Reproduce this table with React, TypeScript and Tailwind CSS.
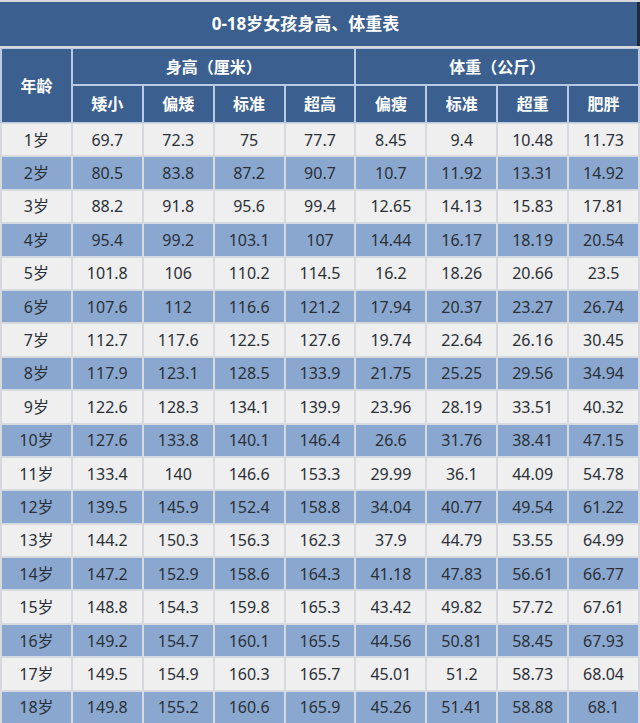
import React from "react";

const rows: string[][] = [
  ["1岁", "69.7", "72.3", "75", "77.7", "8.45", "9.4", "10.48", "11.73"],
  ["2岁", "80.5", "83.8", "87.2", "90.7", "10.7", "11.92", "13.31", "14.92"],
  ["3岁", "88.2", "91.8", "95.6", "99.4", "12.65", "14.13", "15.83", "17.81"],
  ["4岁", "95.4", "99.2", "103.1", "107", "14.44", "16.17", "18.19", "20.54"],
  ["5岁", "101.8", "106", "110.2", "114.5", "16.2", "18.26", "20.66", "23.5"],
  ["6岁", "107.6", "112", "116.6", "121.2", "17.94", "20.37", "23.27", "26.74"],
  ["7岁", "112.7", "117.6", "122.5", "127.6", "19.74", "22.64", "26.16", "30.45"],
  ["8岁", "117.9", "123.1", "128.5", "133.9", "21.75", "25.25", "29.56", "34.94"],
  ["9岁", "122.6", "128.3", "134.1", "139.9", "23.96", "28.19", "33.51", "40.32"],
  ["10岁", "127.6", "133.8", "140.1", "146.4", "26.6", "31.76", "38.41", "47.15"],
  ["11岁", "133.4", "140", "146.6", "153.3", "29.99", "36.1", "44.09", "54.78"],
  ["12岁", "139.5", "145.9", "152.4", "158.8", "34.04", "40.77", "49.54", "61.22"],
  ["13岁", "144.2", "150.3", "156.3", "162.3", "37.9", "44.79", "53.55", "64.99"],
  ["14岁", "147.2", "152.9", "158.6", "164.3", "41.18", "47.83", "56.61", "66.77"],
  ["15岁", "148.8", "154.3", "159.8", "165.3", "43.42", "49.82", "57.72", "67.61"],
  ["16岁", "149.2", "154.7", "160.1", "165.5", "44.56", "50.81", "58.45", "67.93"],
  ["17岁", "149.5", "154.9", "160.3", "165.7", "45.01", "51.2", "58.73", "68.04"],
  ["18岁", "149.8", "155.2", "160.6", "165.9", "45.26", "51.41", "58.88", "68.1"],
];

const heightCols = ["矮小", "偏矮", "标准", "超高"];
const weightCols = ["偏瘦", "标准", "超重", "肥胖"];

function HeadCell({ children, className = "" }: { children: React.ReactNode; className?: string }) {
  return (
    <div className={`flex items-center justify-center bg-[#3b5f8f] text-[16px] font-bold text-white ${className}`}>
      {children}
    </div>
  );
}

export default function App() {
  return (
    <div
      className="flex h-[723px] w-[640px] flex-col bg-[#d6d9dd]"
      style={{ fontFamily: '"Noto Sans", "Noto Sans CJK SC", sans-serif' }}
    >
      <div className="mt-[2px] flex h-[44px] items-center justify-center border-r-[3px] border-[#1c2b40] bg-[#3b5f8f] pr-[26px] text-[17px] font-bold text-white">
        0-18岁女孩身高、体重表
      </div>

      <div className="mt-[2px] grid grid-cols-9 grid-rows-[35px_36px] gap-[2px] bg-[#b9cbe2] py-[1px] pl-[2px] pr-[2px]">
        <HeadCell className="row-span-2">年龄</HeadCell>
        <HeadCell className="col-span-4">身高（厘米）</HeadCell>
        <HeadCell className="col-span-4">体重（公斤）</HeadCell>
        {heightCols.map((c) => (
          <HeadCell key={"h" + c}>{c}</HeadCell>
        ))}
        {weightCols.map((c) => (
          <HeadCell key={"w" + c}>{c}</HeadCell>
        ))}
      </div>

      <div className="grid flex-1 grid-cols-9 grid-rows-[repeat(18,1fr)] gap-[2px] pl-[2px] pr-[2px] pt-[1px] text-[16px] text-[#2b3038]">
        {rows.map((r, i) =>
          r.map((v, j) => (
            <div
              key={i + "-" + j}
              className={`flex items-center justify-center ${i % 2 === 0 ? "bg-[#efefef]" : "bg-[#8aa8cf]"}`}
            >
              {v}
            </div>
          ))
        )}
      </div>
    </div>
  );
}
